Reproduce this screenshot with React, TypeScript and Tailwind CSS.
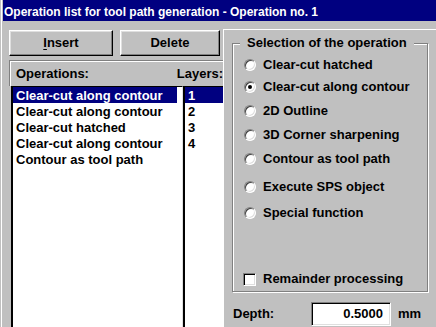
import React from "react";

const ops = [
  "Clear-cut along contour",
  "Clear-cut along contour",
  "Clear-cut hatched",
  "Clear-cut along contour",
  "Contour as tool path",
];
const layers = ["1", "2", "3", "4"];

const choices = [
  { label: "Clear-cut hatched", gap: "mt-[13px]", on: false },
  { label: "Clear-cut along contour", gap: "mt-[6px]", on: true },
  { label: "2D Outline", gap: "mt-[8px]", on: false },
  { label: "3D Corner sharpening", gap: "mt-[8px]", on: false },
  { label: "Contour as tool path", gap: "mt-[8px]", on: false },
  { label: "Execute SPS object", gap: "mt-[12px]", on: false },
  { label: "Special function", gap: "mt-[10px]", on: false },
];

const raised =
  "border border-t-white border-l-white border-b-black border-r-black shadow-[inset_-1px_-1px_0_#808080,inset_1px_1px_0_#dfdfdf]";
const sunken =
  "border border-t-[#808080] border-l-[#808080] border-b-white border-r-white shadow-[inset_1px_1px_0_#000,inset_-1px_-1px_0_#dfdfdf]";

function Radio({ on }: { on: boolean }) {
  return (
    <div className="w-[12px] h-[12px] rounded-full bg-white border border-t-[#808080] border-l-[#808080] border-b-white border-r-white shadow-[inset_1px_1px_0_#404040,inset_-1px_-1px_0_#dfdfdf] flex items-center justify-center">
      {on && <div className="w-[4px] h-[4px] rounded-full bg-black" />}
    </div>
  );
}

export default function App() {
  return (
    <div className="w-[436px] h-[327px] overflow-hidden bg-[#c0c0c0] pl-px font-['Liberation_Sans',Arial,sans-serif] font-bold text-[13px] text-black">
      <div className="h-full border-l border-white pl-px flex flex-col">
        <div className="h-[21px] bg-[#000080] text-white text-[12px] pl-[1px] pt-[4px] leading-[17px] whitespace-nowrap">
          Operation list for tool path generation - Operation no. 1
        </div>

        <div className="flex-1 flex min-h-0">
          {/* left: buttons + lists */}
          <div className="w-[220px] flex flex-col">
            <div className="mt-[9px] ml-[6px] flex gap-[7px]">
              <button className={`w-[104px] h-[26px] ${raised} leading-[24px]`}>
                <span className="underline underline-offset-2">I</span>nsert
              </button>
              <button className={`w-[100px] h-[26px] ${raised} leading-[24px]`}>Delete</button>
            </div>

            <div className="mt-[4px] ml-[6px] h-[26px] border-t border-l border-[#808080] shadow-[inset_1px_1px_0_white] flex items-center justify-between pl-[6px] pt-px">
              <span>Operations:</span>
              <span>Layers:</span>
            </div>

            <div className="ml-[8px] flex-1 flex min-h-0">
              <div className="w-[172px] bg-white border-t border-l-2 border-r border-t-black border-l-black border-r-[#dfdfdf] pr-[5px]">
                {ops.map((o, i) => (
                  <div
                    key={i}
                    className={`h-[16px] leading-[15px] pt-px pl-[3px] whitespace-nowrap ${i === 0 ? "bg-[#000080] text-white" : ""}`}
                  >
                    {o}
                  </div>
                ))}
              </div>
              <div className="flex-1 bg-white border-t border-l-2 border-black">
                {layers.map((l, i) => (
                  <div
                    key={i}
                    className={`h-[16px] leading-[15px] pt-px pl-[3px] ${i === 0 ? "bg-[#000080] text-white" : ""}`}
                  >
                    {l}
                  </div>
                ))}
              </div>
            </div>
          </div>

          {/* right: selection panel */}
          <div className="flex-1 mt-[8px] border-t border-l border-white pl-[8px]">
            <div className="relative mt-[13px] w-[196px] h-[249px] border border-[#808080] shadow-[1px_1px_0_white,inset_1px_1px_0_white] flex flex-col">
              <span className="absolute -top-[9px] left-[7px] px-[7px] bg-[#c0c0c0] leading-[16px] whitespace-nowrap">
                Selection of the operation
              </span>
              {choices.map((c) => (
                <div key={c.label} className={`${c.gap} h-[16px] flex items-center pl-[11px] gap-[7px] leading-[16px] whitespace-nowrap`}>
                  <Radio on={c.on} />
                  <span>{c.label}</span>
                </div>
              ))}
              <div className="mt-[50px] h-[16px] flex items-center pl-[10px] gap-[7px] leading-[16px] whitespace-nowrap">
                <div className={`w-[13px] h-[13px] bg-white ${sunken}`} />
                <span>Remainder processing</span>
              </div>
            </div>

            <div className="mt-[10px] flex items-center pl-px">
              <span className="w-[78px]">Depth:</span>
              <div className={`w-[80px] h-[24px] bg-white ${sunken} flex items-center justify-end pr-[7px] leading-[16px]`}>
                0.5000
              </div>
              <span className="ml-[7px]">mm</span>
            </div>
          </div>
        </div>
      </div>
    </div>
  );
}
